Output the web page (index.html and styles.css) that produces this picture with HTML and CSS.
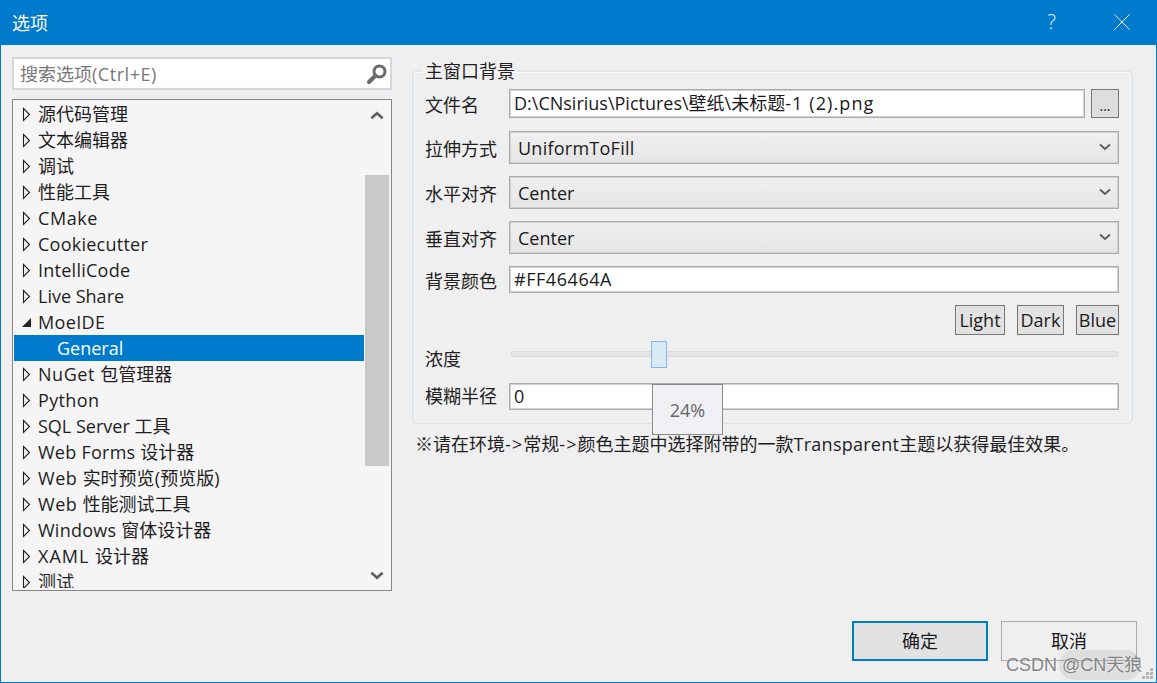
FILE: index.html
```html
<!DOCTYPE html>
<html lang="zh-CN">
<head>
<meta charset="utf-8">
<title>选项</title>
<link rel="stylesheet" href="styles.css">
</head>
<body>
<svg class="defs" width="0" height="0" aria-hidden="true">
  <symbol id="tri" viewBox="0 0 9 15"><path d="M1.5 1.5 L7.5 7.5 L1.5 13.5 Z" fill="none" stroke="#222" stroke-width="1.1"/></symbol>
  <symbol id="chev" viewBox="0 0 12 8"><path d="M1 1.5 L6 6 L11 1.5" fill="none" stroke="#5f5f5f" stroke-width="2"/></symbol>
</svg>
<div class="window">
  <header class="titlebar">
    <span class="title">选项</span>
    <span class="help">?</span>
    <svg class="close" width="16" height="16" viewBox="0 0 16 16"><path d="M0.5 0.5 L15.5 15.5 M15.5 0.5 L0.5 15.5" stroke="#fff" stroke-width="1" fill="none"/></svg>
  </header>
  <main class="content">
    <aside class="left">
      <div class="search">
        <span class="search-text">搜索选项<span class="ls3">(Ctrl+E)</span></span>
        <svg width="22" height="22" viewBox="0 0 22 22"><circle cx="13.5" cy="8.5" r="5.5" fill="none" stroke="#6a6a6a" stroke-width="3"/><path d="M9.5 12.5 L3 19" stroke="#6a6a6a" stroke-width="4" stroke-linecap="round"/></svg>
      </div>
      <div class="tree">
        <ul class="rows">
          <li class="row"><svg class="arrow"><use href="#tri"/></svg>源代码管理</li>
          <li class="row"><svg class="arrow"><use href="#tri"/></svg>文本编辑器</li>
          <li class="row"><svg class="arrow"><use href="#tri"/></svg>调试</li>
          <li class="row"><svg class="arrow"><use href="#tri"/></svg>性能工具</li>
          <li class="row"><svg class="arrow"><use href="#tri"/></svg><span class="ls3">CMake</span></li>
          <li class="row"><svg class="arrow"><use href="#tri"/></svg><span class="ls1">Cookiecutter</span></li>
          <li class="row"><svg class="arrow"><use href="#tri"/></svg><span class="ls1">IntelliCode</span></li>
          <li class="row"><svg class="arrow"><use href="#tri"/></svg>Live Share</li>
          <li class="row"><svg class="arrow" viewBox="0 0 9 15"><path d="M0 12 L9 12 L9 3 Z" fill="#222"/></svg><span class="ls2">MoeIDE</span></li>
          <li class="row selected">General</li>
          <li class="row"><svg class="arrow"><use href="#tri"/></svg><span class="ls3">NuGet </span>包管理器</li>
          <li class="row"><svg class="arrow"><use href="#tri"/></svg><span class="ls2">Python</span></li>
          <li class="row"><svg class="arrow"><use href="#tri"/></svg>SQL Server 工具</li>
          <li class="row"><svg class="arrow"><use href="#tri"/></svg><span class="ls1">Web Forms </span>设计器</li>
          <li class="row"><svg class="arrow"><use href="#tri"/></svg><span class="ls3">Web </span>实时预览<span class="ls1">(</span>预览版<span class="ls1">)</span></li>
          <li class="row"><svg class="arrow"><use href="#tri"/></svg><span class="ls3">Web </span>性能测试工具</li>
          <li class="row"><svg class="arrow"><use href="#tri"/></svg><span class="ls1">Windows </span>窗体设计器</li>
          <li class="row"><svg class="arrow"><use href="#tri"/></svg><span class="ls4">XAML </span>设计器</li>
          <li class="row"><svg class="arrow"><use href="#tri"/></svg>测试</li>
        </ul>
        <div class="scrollbar">
          <svg class="sb-arrow up" width="14" height="9" viewBox="0 0 12 8"><path d="M1 6.5 L6 2 L11 6.5" fill="none" stroke="#5f5f5f" stroke-width="2.4"/></svg>
          <div class="thumb"></div>
          <svg class="sb-arrow down" width="14" height="9" viewBox="0 0 12 8"><path d="M1 1.5 L6 6 L11 1.5" fill="none" stroke="#5f5f5f" stroke-width="2.4"/></svg>
        </div>
      </div>
    </aside>
    <section class="right">
      <fieldset class="group">
        <legend class="legend">主窗口背景</legend>
        <div class="form-row file-row">
          <label class="label">文件名</label>
          <div class="field text">D:\CNsirius\Pictures\壁纸\未标题<span class="ls5">-1 (2).png</span></div>
          <div class="browse">...</div>
        </div>
        <div class="form-row combo-row">
          <label class="label">拉伸方式</label>
          <div class="field combo"><span class="ls1">UniformToFill</span><svg class="chev"><use href="#chev"/></svg></div>
        </div>
        <div class="form-row combo-row">
          <label class="label">水平对齐</label>
          <div class="field combo"><span>Center</span><svg class="chev"><use href="#chev"/></svg></div>
        </div>
        <div class="form-row combo-row">
          <label class="label">垂直对齐</label>
          <div class="field combo"><span>Center</span><svg class="chev"><use href="#chev"/></svg></div>
        </div>
        <div class="form-row color-row">
          <label class="label">背景颜色</label>
          <div class="field text"><span class="ls3">#FF46464A</span></div>
        </div>
        <div class="presets">
          <div class="preset preset-light">Light</div>
          <div class="preset preset-dark">Dark</div>
          <div class="preset preset-blue">Blue</div>
        </div>
        <div class="form-row slider-row">
          <label class="label">浓度</label>
          <div class="slider"><div class="track"></div><div class="knob"></div></div>
        </div>
        <div class="form-row blur-row">
          <label class="label">模糊半径</label>
          <div class="field text">0</div>
        </div>
      </fieldset>
      <p class="note">※请在环境<span class="ls5">-&gt;</span>常规<span class="ls5">-&gt;</span>颜色主题中选择附带的一款<span class="ls1">Transparent</span>主题以获得最佳效果。</p>
      <div class="tooltip">24%</div>
    </section>
  </main>
  <footer class="footer">
    <div class="btn primary">确定</div>
    <div class="btn">取消</div>
  </footer>
  <div class="wm-pill"></div>
  <div class="watermark">CSDN @CN天狼</div>
  <svg class="grip" width="12" height="12" viewBox="0 0 12 12"><path d="M8 0h3v3H8z M4 4h3v3H4z M8 4h3v3H8z M0 8h3v3H0z M4 8h3v3H4z M8 8h3v3H8z" fill="#b5b5b5"/></svg>
</div>
</body>
</html>
```
FILE: styles.css
```css
* { box-sizing: border-box; }
html, body { margin: 0; padding: 0; }
body {
  width: 1157px;
  height: 683px;
  overflow: hidden;
  font-family: "Open Sans", "Noto Sans CJK SC", sans-serif;
  font-size: 18px;
  color: #1a1a1a;
}
.defs { position: absolute; }
.ls1 { letter-spacing: 0.25px; }
.ls2 { letter-spacing: 0.35px; }
.ls3 { letter-spacing: 0.55px; }
.ls4 { letter-spacing: 1px; }
.ls5 { letter-spacing: 1.1px; }
.window {
  position: relative;
  width: 1157px;
  height: 683px;
  background: #efefef;
  border: 1px solid #007acc;
  border-top: 0;
  display: flex;
  flex-direction: column;
}
.titlebar {
  height: 45px;
  flex: none;
  background: #007acc;
  color: #fff;
  display: flex;
  align-items: center;
  padding: 0 26px 2px 11px;
}
.title { flex: 1; }
.help { margin-right: 58px; font-size: 20px; font-weight: 300; color: #e6f3fb; }
.content {
  flex: 1;
  display: flex;
  padding: 12px 23px 0 11px;
  min-height: 0;
}
.left { width: 380px; flex: none; }
.search {
  height: 33px;
  background: #fff;
  border: 2px solid #d6d6e0;
  display: flex;
  align-items: center;
  justify-content: space-between;
  padding: 0 2px 0 6px;
  color: #777;
}
.search-text { line-height: 29px; padding-top: 2px; }
.tree {
  margin-top: 9px;
  height: 492px;
  border: 1px solid #85858a;
  background: #f5f5f5;
  display: flex;
  padding: 1px 2px 2px 1px;
  overflow: hidden;
}
.rows {
  list-style: none;
  margin: 0 1px 0 0;
  padding: 0;
  flex: 1;
  overflow: hidden;
}
.row {
  height: 26px;
  line-height: 26px;
  padding-left: 24px;
  display: flex;
  align-items: center;
  white-space: pre;
  color: #1e1e1e;
}
.row.selected { background: #007acc; color: #fff; padding-left: 43px; }
.arrow { width: 9px; height: 15px; margin: 0 7px 0 -16px; flex: none; }
.scrollbar {
  width: 24px;
  flex: none;
  display: flex;
  flex-direction: column;
  align-items: center;
  background: #f5f5f5;
  position: relative;
}
.sb-arrow { flex: none; }
.sb-arrow.up { margin-top: 10px; }
.thumb { width: 24px; height: 291px; margin-top: 55px; background: #c9c9c9; }
.sb-arrow.down { margin-top: 105px; }
.right { flex: 1; margin-left: 20px; position: relative; }
.group {
  margin: 2px 0 0;
  width: 721px;
  height: 365px;
  padding: 6px 12px 0 11px;
  border: 2px solid #dfe7ec;
  border-radius: 5px;
  box-shadow: inset 0 0 0 1px #fafafa;
}
.legend { padding: 0 3px; margin-left: -3px; line-height: 24px; color: #1e1e1e; }
.form-row { display: flex; align-items: center; }
.label { width: 84px; flex: none; color: #1e1e1e; }
.field {
  flex: 1;
  min-width: 0;
  border: 1px solid #acacac;
  box-shadow: inset 0 0 0 1px #d0d0d0;
}
.text {
  background: #fff;
  padding: 0 4px;
  line-height: 25px;
}
.file-row { height: 29px; }
.file-row .text { height: 29px; line-height: 27px; }
.browse {
  width: 28px;
  height: 29px;
  margin-left: 6px;
  background: #dedede;
  border: 1px solid #777;
  font-size: 14px;
  text-align: center;
  line-height: 32px;
}
.combo-row { height: 33px; margin-top: 13px; }
.combo-row + .combo-row { margin-top: 12px; }
.combo {
  height: 33px;
  padding: 0 7px 0 8px;
  display: flex;
  align-items: center;
  justify-content: space-between;
  background: linear-gradient(#f0f0f0, #e5e5e5);
}
.chev { width: 12px; height: 8px; margin-bottom: 2px; }
.color-row { height: 27px; margin-top: 12px; }
.color-row .text { height: 27px; }
.presets { display: flex; justify-content: flex-end; gap: 12px; margin-top: 12px; }
.preset {
  height: 30px;
  line-height: 28px;
  text-align: center;
  background: #e2e2e2;
  border: 1px solid #777;
}
.preset-light { width: 50px; }
.preset-dark { width: 47px; }
.preset-blue { width: 43px; }
.slider-row { height: 30px; margin-top: 6px; align-items: flex-start; }
.slider-row .label { margin-top: 3px; line-height: 30px; }
.slider { position: relative; flex: 1; height: 27px; margin: 0 1px 0 2px; }
.track { position: absolute; left: 0; right: 0; top: 10px; height: 6px; background: #e4e4e4; border: 1px solid #dcdcdc; }
.knob { position: absolute; left: 140px; top: 0; width: 16px; height: 27px; background: #d8eaf4; border: 1px solid #7cb8ea; }
.blur-row { height: 27px; margin-top: 12px; }
.blur-row .text { height: 27px; }
.blur-row .label { margin-bottom: 3px; }
.note { margin: 7px 0 0 3px; white-space: nowrap; line-height: 26px; color: #1e1e1e; }
.tooltip {
  position: absolute;
  left: 240px;
  top: 327px;
  width: 71px;
  height: 51px;
  background: #f0f0f5;
  border: 1px solid #8a8a8a;
  color: #666;
  display: flex;
  align-items: center;
  justify-content: center;
}
.footer {
  flex: none;
  height: 62px;
  padding-top: 1px;
  display: flex;
  justify-content: flex-end;
  gap: 13px;
  padding-right: 19px;
}
.btn {
  width: 136px;
  height: 40px;
  border: 1px solid #acacac;
  background: #efefef;
  text-align: center;
  line-height: 38px;
}
.btn.primary { border: 2px solid #007acc; background: #e2e2e2; line-height: 36px; }
.wm-pill {
  position: absolute;
  left: 1058px;
  top: 650px;
  width: 82px;
  height: 30px;
  border-radius: 15px;
  background: rgba(120, 120, 120, 0.14);
}
.watermark {
  position: absolute;
  left: 1005px;
  top: 652px;
  font-family: "Liberation Sans", "Noto Sans CJK SC", sans-serif;
  font-size: 18px;
  line-height: 26px;
  color: rgba(110, 110, 110, 0.85);
  text-shadow: 0 0 2px rgba(255, 255, 255, 0.8);
  white-space: nowrap;
}
.grip { position: absolute; right: 2px; bottom: 2px; }
```
